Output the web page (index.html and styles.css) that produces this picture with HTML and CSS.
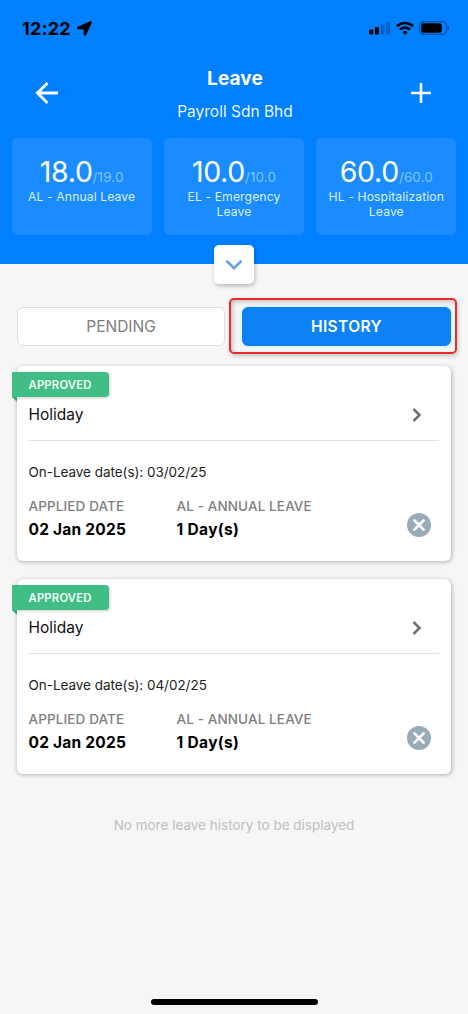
FILE: index.html
```html
<!DOCTYPE html>
<html lang="en">
<head>
<meta charset="utf-8">
<title>Leave</title>
<link rel="stylesheet" href="styles.css">
</head>
<body>
<div class="screen">
  <header class="header">
    <div class="status">
      <div class="status-left">
        <span class="time">12:22</span>
        <svg class="location" width="15" height="15" viewBox="0 0 15 15"><path d="M13 .3.900 5.800C-.300 6.400-.100 8.300 1.300 8.300h4.900c.3 0 .5.200.5.500v4.700c0 1.500 1.800 1.700 2.400.4L14.700 2C15.200.800 14.200-.200 13 .3Z"/></svg>
      </div>
      <div class="status-right">
        <svg width="22" height="14" viewBox="0 0 22 14"><rect x="0.200" y="8.500" width="4" height="5" rx="1"/><rect x="5.900" y="6" width="4" height="7.500" rx="1"/><g opacity=".22"><rect x="11.600" y="3.500" width="4" height="10" rx="1"/><rect x="17.200" y="0.800" width="4" height="12.700" rx="1"/></g></svg>
        <svg class="wifi" width="18" height="14" viewBox="0 0 18 14"><g fill="none" stroke="#000" stroke-width="2.600"><path d="M1 5.200a11.600 11.600 0 0 1 16 0"/><path d="M4 8.600a7.200 7.200 0 0 1 10 0"/></g><path d="M9 13.700 6.500 11.200a3.600 3.600 0 0 1 5 0Z"/></svg>
        <svg class="battery" width="31" height="14" viewBox="0 0 31 14"><rect x=".600" y=".600" width="26.800" height="12.800" rx="4" fill="none" stroke="#000" stroke-opacity=".35" stroke-width="1.200"/><rect x="2.300" y="2.300" width="20.500" height="9.400" rx="2.300"/><path d="M28.600 4.700q1.700 1 1.700 2.300t-1.700 2.300Z" opacity=".45"/></svg>
      </div>
    </div>
    <div class="nav">
      <svg class="back" width="24" height="24" viewBox="0 0 24 24"><path d="M23 12H2.500M12.500 1.900 2.400 12l10.100 10.100" fill="none" stroke="#fff" stroke-width="2.800"/></svg>
      <div class="heading">
        <h1 class="title">Leave</h1>
        <p class="company">Payroll Sdn Bhd</p>
      </div>
      <svg class="add" width="20" height="20" viewBox="0 0 20 20"><path d="M10 0v20M0 10h20" stroke="#fff" stroke-width="2.600"/></svg>
    </div>
    <div class="balances">
      <div class="balance"><div class="figure"><span class="left">18.0</span><span class="total">/19.0</span></div><div class="kind">AL - Annual Leave</div></div>
      <div class="balance"><div class="figure"><span class="left">10.0</span><span class="total">/10.0</span></div><div class="kind">EL - Emergency<br>Leave</div></div>
      <div class="balance"><div class="figure"><span class="left">60.0</span><span class="total">/60.0</span></div><div class="kind">HL - Hospitalization<br>Leave</div></div>
    </div>
    <div class="expand"><svg width="18" height="12" viewBox="0 0 18 12"><path d="m1.500 1.800 7.500 7.400 7.500-7.400" fill="none" stroke="#67a5dc" stroke-width="2.600"/></svg></div>
  </header>
  <main class="content">
    <div class="tabs">
      <div class="tab"><span class="pending-label">PENDING</span></div>
      <div class="tab active"><span class="history-label">HISTORY</span></div>
    </div>
    <article class="card">
      <div class="ribbon"><span>APPROVED</span></div>
      <div class="card-head"><span class="reason">Holiday</span><svg class="chev" width="10" height="14" viewBox="0 0 10 14"><path d="m1.500 1 6 6-6 6" fill="none" stroke="#707070" stroke-width="2.500"/></svg></div>
      <div class="dates">On-Leave date(s): 03/02/25</div>
      <div class="details">
        <div class="detail"><div class="label">APPLIED DATE</div><div class="value">02 Jan 2025</div></div>
        <div class="detail wide"><div class="label">AL - ANNUAL LEAVE</div><div class="value days">1 Day(s)</div></div>
        <svg class="cancel" width="24" height="24" viewBox="0 0 24 24"><circle cx="12" cy="12" r="12" fill="#98abba"/><path d="m7.400 7.400 9.200 9.200m0-9.200-9.200 9.200" stroke="#fff" stroke-width="2.700" stroke-linecap="round"/></svg>
      </div>
    </article>
    <article class="card">
      <div class="ribbon"><span>APPROVED</span></div>
      <div class="card-head"><span class="reason">Holiday</span><svg class="chev" width="10" height="14" viewBox="0 0 10 14"><path d="m1.500 1 6 6-6 6" fill="none" stroke="#707070" stroke-width="2.500"/></svg></div>
      <div class="dates">On-Leave date(s): 04/02/25</div>
      <div class="details">
        <div class="detail"><div class="label">APPLIED DATE</div><div class="value">02 Jan 2025</div></div>
        <div class="detail wide"><div class="label">AL - ANNUAL LEAVE</div><div class="value days">1 Day(s)</div></div>
        <svg class="cancel" width="24" height="24" viewBox="0 0 24 24"><circle cx="12" cy="12" r="12" fill="#98abba"/><path d="m7.400 7.400 9.200 9.200m0-9.200-9.200 9.200" stroke="#fff" stroke-width="2.700" stroke-linecap="round"/></svg>
      </div>
    </article>
    <p class="end">No more leave history to be displayed</p>
  </main>
  <div class="home-bar"></div>
</div>
</body>
</html>
```
FILE: styles.css
```css
* { box-sizing: border-box; }
body { margin: 0; background: #f6f6f6; font-family: Inter, "Liberation Sans", sans-serif; color: #111; }
h1, p { margin: 0; }
svg { display: block; flex: none; }
.screen { width: 468px; height: 1014px; display: flex; flex-direction: column; overflow: hidden; }

.header { position: relative; height: 264px; flex: none; background: #007fff; }
.status { height: 56px; padding: 0 20px 0 22px; display: flex; justify-content: space-between; align-items: center; }
.status-left, .status-right { display: flex; align-items: center; }
.time { font-size: 18px; font-weight: 700; color: #000; letter-spacing: 0.200px; }
.location { margin-left: 6px; }
.status-right { padding-right: 0; }
.wifi { margin-left: 5px; }
.battery { margin-left: 5px; margin-right: -2px; }

.nav { height: 82px; padding: 0 37px 0 35px; display: flex; justify-content: space-between; align-items: flex-start; }
.back { margin-top: 25px; }
.add { margin-top: 27px; }
.heading { text-align: center; color: #fff; padding-top: 11px; }
.title { font-size: 19px; line-height: 24px; font-weight: 700; letter-spacing: 0.100px; }
.company { margin-top: 11px; font-size: 15.500px; line-height: 20px; color: #e8f6ff; white-space: nowrap; }

.balances { padding: 0 11.500px; display: grid; grid-template-columns: repeat(3, 1fr); gap: 12px; }
.balance { height: 97px; padding-top: 16px; border-radius: 5px; background: #1a8cff; text-align: center; }
.figure { height: 35px; line-height: 36px; white-space: nowrap; }
.left { font-size: 28.500px; color: #fff; letter-spacing: -0.300px; }
.total { font-size: 13.500px; color: #7fc5ff; letter-spacing: 0.100px; }
.kind { font-size: 12.200px; line-height: 15px; color: #d9f1ff; letter-spacing: 0.100px; white-space: nowrap; }
.expand { position: absolute; left: 214px; top: 245px; width: 40px; height: 39px; border-radius: 5px; background: #fff; box-shadow: 1px 2px 4px rgba(0,0,0,.25); display: flex; align-items: center; justify-content: center; }

.content { flex: 1; padding: 43px 17px 0; }
.tabs { display: grid; grid-template-columns: 208px 209px; gap: 17px; }
.tab { position: relative; height: 39px; border: 1px solid #dedede; border-radius: 6px; background: #fff; display: flex; align-items: center; justify-content: center; font-size: 15.500px; color: #7d7d7d; }
.active { background: #0c82f5; border-color: #0c82f5; color: #fff; font-weight: 600; letter-spacing: 0.400px; box-shadow: 0 0 3px 1px #cdeffb; }
/* Highlight frame around the selected tab */
.active::after { content: ""; position: absolute; inset: -10px -7px -9px -14px; border: 2px solid #ee2a2d; border-radius: 5px; box-shadow: 1px 2px 4px rgba(0,0,0,.2), inset 2px 2px 4px rgba(0,0,0,.2); }

.card { position: relative; height: 195px; margin-top: 18px; padding: 0 12px 0 11.500px; border-radius: 6px; background: #fff; box-shadow: 0.500px 1px 4px rgba(0,0,0,.28); }
.tabs + .card { margin-top: 20px; }
.ribbon { position: absolute; left: -5.500px; top: 6px; width: 97.500px; height: 25px; padding-left: 17px; border-radius: 0 4px 4px 0; background: #41be86; color: #effff6; font-size: 11.300px; font-weight: 600; line-height: 26px; letter-spacing: 0.180px; box-shadow: 1px 1px 3px rgba(0,0,0,.2); }
.ribbon::after { content: ""; position: absolute; left: 0; top: 25px; border-top: 5px solid #36ad78; border-left: 5.500px solid transparent; }
.card-head { height: 75px; padding: 38px 17px 0 0; border-bottom: 1px solid #dfdfdf; display: flex; justify-content: space-between; }
.reason { font-size: 15.500px; line-height: 22px; }
.chev { margin-top: 4px; }
.dates { margin-top: 22px; font-size: 13.500px; line-height: 18px; color: #222; letter-spacing: -0.040px; }
.details { margin-top: 15px; display: flex; }
.detail { width: 148px; white-space: nowrap; }
.wide { width: 230px; }
.label { font-size: 13.500px; line-height: 20px; color: #808080; font-weight: 500; letter-spacing: 0.120px; }
.value { margin-top: 3px; font-size: 15.500px; line-height: 22px; font-weight: 700; color: #000; letter-spacing: 0.220px; }
.days { letter-spacing: 0.350px; }
.cancel { margin-top: 17px; }
.end { margin-top: 42px; text-align: center; font-size: 13.500px; line-height: 18px; color: #c0c0c0; }
.home-bar { width: 167px; height: 6px; margin: 0 auto 9px; border-radius: 3px; background: #000; }
```
